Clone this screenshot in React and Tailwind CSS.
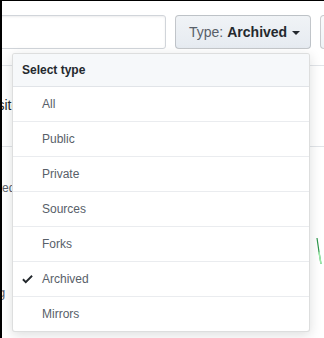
import React from 'react';

const types = ['All', 'Public', 'Private', 'Sources', 'Forks', 'Archived', 'Mirrors'];

const Check = () => (
  <svg width="11" height="14" viewBox="0 0 12 16" className="fill-[#24292e]">
    <path d="M12 5l-8 8-4-4 1.5-1.5L4 10l6.5-6.5L12 5z" />
  </svg>
);

// dropdown listing repo types
const TypeMenu = ({ selected }) => {
  return (
    <div className="absolute left-[10px] top-[52px] w-[298px] bg-white border border-[rgba(27,31,35,0.15)] rounded-[3px] shadow-[0_3px_12px_rgba(27,31,35,0.15)] overflow-hidden">
      <div className="h-[33px] flex items-center pl-[9px] bg-[#f6f8fa] border-b border-[#e1e4e8] text-[12px] font-bold text-[#24292e]">
        Select type
      </div>
      {types.map((t, i) => (
        <div
          key={t}
          className={
            i < types.length - 1
              ? 'h-[35px] flex items-center pl-[9px] border-b border-[#eaecef] text-[12px] text-[#586069]'
              : 'h-[34px] flex items-center pl-[9px] text-[12px] text-[#586069]'
          }
        >
          <span className="w-[20px] flex items-center">{t === selected && <Check />}</span>
          {t}
        </div>
      ))}
    </div>
  );
};

const App = () => {
  return (
    <div className="relative w-[324px] h-[338px] overflow-hidden bg-white border-l-2 border-t border-black font-['Liberation_Sans',Arial,sans-serif]">
      {/* filter bar */}
      <div className="flex mt-[14px] h-[34px]">
        <div className="shrink-0 w-[200px] -ml-[36px] border border-[#d1d5da] rounded-[3px] shadow-[inset_0_1px_2px_rgba(27,31,35,0.075)] bg-white" />
        <button className="shrink-0 ml-[9px] w-[136px] flex items-center pl-[13px] border border-[rgba(27,31,35,0.2)] rounded-[4px] bg-gradient-to-b from-[#f0f3f6] to-[#e6ebf1] text-[14px]">
          <span className="text-[#586069]">Type:</span>
          <span className="ml-[4px] font-bold text-[#24292e]">Archived</span>
          <svg width="8" height="4" viewBox="0 0 8 4" className="ml-[5px] mt-[1px] fill-[#24292e]">
            <path d="M0 0h8L4 4z" />
          </svg>
        </button>
        <div className="shrink-0 ml-[9px] w-[80px] border border-[rgba(27,31,35,0.2)] rounded-[4px] bg-gradient-to-b from-[#fafbfc] to-[#eff3f6]" />
      </div>

      {/* repo list behind the menu */}
      <div className="h-[17px] border-b border-[#e1e4e8]" />
      <div className="h-[81px] border-b border-[#e1e4e8] flex items-center">
        <span className="-ml-[38px] mt-[-2px] text-[14px] text-[#24292e] whitespace-nowrap">Repository</span>
      </div>
      <div className="relative h-[176px] border-b border-[#e1e4e8]">
        <div className="-ml-[32px] mt-[32px] text-[12px] text-[#586069] whitespace-nowrap">Updated</div>
        <svg width="8" height="30" viewBox="0 0 8 30" className="absolute left-[314px] top-[58px]">
          <path d="M1 1 L3 15 L5 27" stroke="#2c974b" strokeWidth="1.2" fill="none" />
          <path d="M3 15 L5 27" stroke="#9be9a8" strokeWidth="1.5" fill="none" />
        </svg>
        <div className="-ml-[43px] mt-[86px] text-[13px] text-[#586069] whitespace-nowrap">Building</div>
      </div>

      <TypeMenu selected="Archived" />
    </div>
  );
};

export default App;
